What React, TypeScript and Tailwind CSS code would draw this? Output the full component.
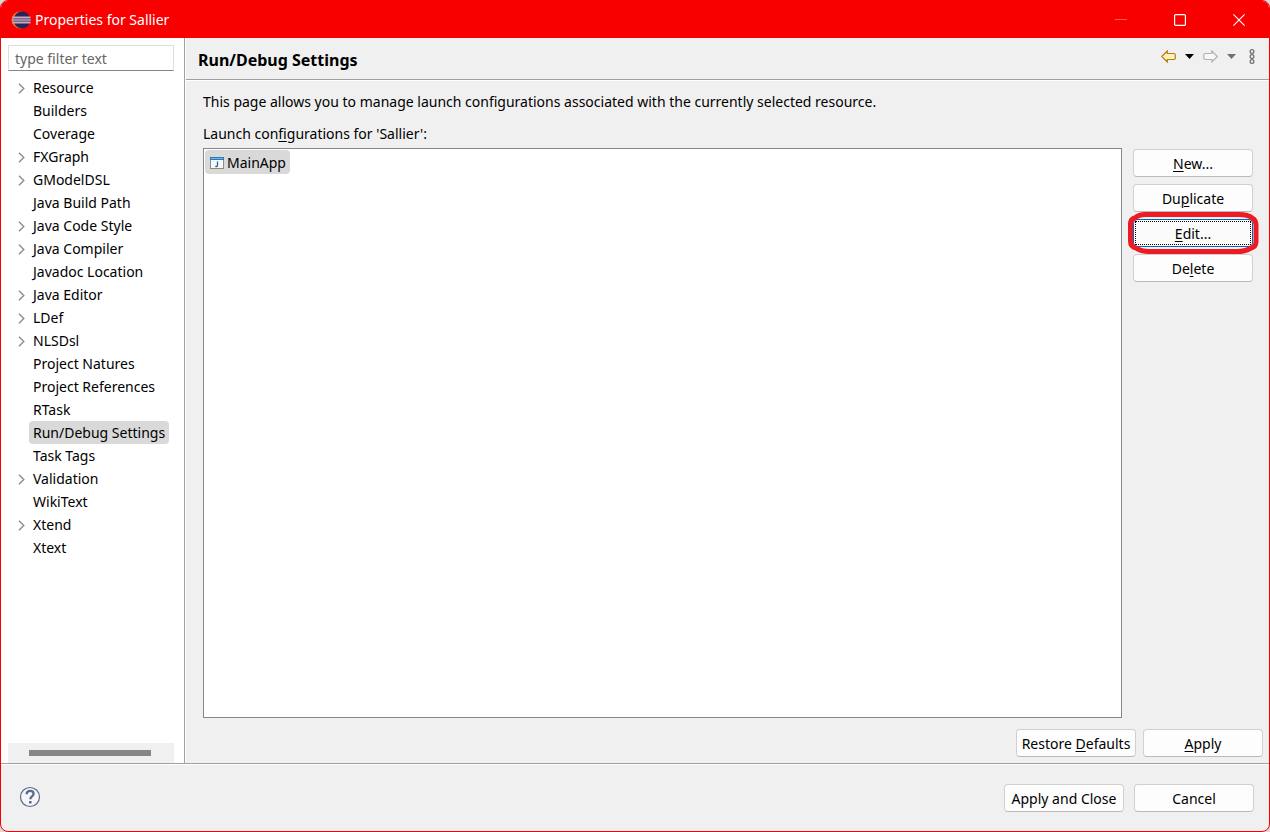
import type { ReactNode } from "react";

type TreeItem = { name: string; expandable?: boolean; selected?: boolean };

const treeItems: TreeItem[] = [
  { name: "Resource", expandable: true },
  { name: "Builders" },
  { name: "Coverage" },
  { name: "FXGraph", expandable: true },
  { name: "GModelDSL", expandable: true },
  { name: "Java Build Path" },
  { name: "Java Code Style", expandable: true },
  { name: "Java Compiler", expandable: true },
  { name: "Javadoc Location" },
  { name: "Java Editor", expandable: true },
  { name: "LDef", expandable: true },
  { name: "NLSDsl", expandable: true },
  { name: "Project Natures" },
  { name: "Project References" },
  { name: "RTask" },
  { name: "Run/Debug Settings", selected: true },
  { name: "Task Tags" },
  { name: "Validation", expandable: true },
  { name: "WikiText" },
  { name: "Xtend", expandable: true },
  { name: "Xtext" },
];

function Mnemonic({ children }: { children: ReactNode }) {
  return <span className="underline decoration-1 underline-offset-2">{children}</span>;
}

function DialogButton({ children, focused = false }: { children: ReactNode; focused?: boolean }) {
  return (
    <button
      type="button"
      className={
        focused
          ? "h-7 w-[120px] rounded border border-[#0067c0] bg-[#fbfbfb] p-px text-sm whitespace-nowrap"
          : "h-7 w-[120px] rounded border border-[#d0d0d0] border-b-[#bababa] bg-[#fdfdfd] pt-0.5 text-sm whitespace-nowrap"
      }
    >
      {focused ? (
        <span className="flex h-full items-center justify-center border border-dotted border-black pt-0.5">{children}</span>
      ) : (
        children
      )}
    </button>
  );
}

function EclipseLogo() {
  return (
    <svg width="20" height="18" viewBox="0 0 20 18" aria-hidden="true">
      <circle cx="9" cy="9" r="8.500" fill="#e8742c" />
      <circle cx="11" cy="9" r="8.500" fill="#2c2255" />
      <path d="M1.500 6.200h18M1.200 9h18.600M1.500 11.800h18" stroke="#c9a9bd" strokeWidth="1.500" />
      <path d="M2 7.600h17.400M2 10.400h17.400" stroke="#8a6f9c" strokeWidth="1" />
    </svg>
  );
}

function JavaAppIcon() {
  return (
    <svg width="14" height="13" viewBox="0 0 14 13" aria-hidden="true">
      <rect x="0.5" y="0.5" width="13" height="11" fill="#f2fafd" stroke="#9a8b5c" />
      <path d="M.5 3v6M13.500 3v6" stroke="#7c93a0" />
      <rect width="14" height="3" fill="#2f78b7" />
      <path d="M1 1.500h12" stroke="#79b5e4" />
      <path d="M7.500 4.500v3.700c0 1.100-.8 1.500-2.200 1.200" fill="none" stroke="#2b628f" strokeWidth="1.300" />
    </svg>
  );
}

function Arrow({ forward = false }: { forward?: boolean }) {
  return (
    <svg width="15" height="13" viewBox="0 0 15 13" aria-hidden="true">
      {forward ? (
        <path d="M14.300 6.500 8.800 1v2.500H2.200Q.8 3.500.8 4.900V8.100Q.8 9.500 2.200 9.500h6.600V12z" fill="#f7f7f7" stroke="#b3b3b3" strokeWidth="1.200" />
      ) : (
        <path d="M.8 6.500 6.300 1v2.500h6.600q1.400 0 1.400 1.400v3.200q0 1.400-1.400 1.400H6.300V12z" fill="#fff3b8" stroke="#bc7b16" strokeWidth="1.200" />
      )}
    </svg>
  );
}

function MenuTriangle({ enabled = false }: { enabled?: boolean }) {
  return (
    <svg width="9" height="5" viewBox="0 0 9 5" aria-hidden="true">
      <path d="M0 0h9L4.500 5z" fill={enabled ? "#000" : "#707070"} />
    </svg>
  );
}

export default function App() {
  return (
    <div className="bg-[#d9d9d9] font-['Noto_Sans','Open_Sans',sans-serif] text-sm text-black">
      <div className="flex min-h-screen flex-col overflow-hidden rounded-lg border border-[#f80000] bg-[#f0f0f0]">
        <header className="flex h-[37px] shrink-0 items-center bg-[#f80000] pr-px pl-[10px] text-white">
          <EclipseLogo />
          <h1 className="ml-1 flex-1 text-sm">Properties for Sallier</h1>
          <button type="button" aria-label="Minimize" disabled className="flex h-full w-[59px] items-center justify-center">
            <svg width="12" height="12" viewBox="0 0 12 12">
              <path d="M0 5.500h12" stroke="#fb5c5c" />
            </svg>
          </button>
          <button type="button" aria-label="Maximize" className="flex h-full w-[59px] items-center justify-center">
            <svg width="12" height="12" viewBox="0 0 12 12">
              <rect x="0.6" y="0.6" width="10.800" height="10.800" rx="1" fill="none" stroke="#fff" strokeWidth="1.200" />
            </svg>
          </button>
          <button type="button" aria-label="Close" className="flex h-full w-[59px] items-center justify-center">
            <svg width="12" height="12" viewBox="0 0 12 12">
              <path d="m.4.4 11.200 11.200M11.600.4.4 11.600" stroke="#fff" strokeWidth="1.100" />
            </svg>
          </button>
        </header>

        <div className="flex flex-1">
          <aside className="flex w-[184px] shrink-0 flex-col border-r border-[#a0a0a0] bg-white pt-[7px] pr-[10px] pl-[7px]">
            <input
              type="text"
              aria-label="Filter"
              placeholder="type filter text"
              className="h-[26px] w-full border border-[#dedede] border-b-[#868686] bg-white px-1.5 text-sm outline-none placeholder:text-[#666]"
            />
            <ul role="tree" aria-label="Property pages" className="mt-[5px] flex-1">
              {treeItems.map((item) => (
                <li key={item.name} role="treeitem" aria-selected={!!item.selected} className="flex h-[23px] items-center">
                  <span className="flex w-[21px] justify-center pt-px pl-1.5">
                    {item.expandable && (
                      <svg width="7" height="11" viewBox="0 0 7 11" aria-hidden="true">
                        <path d="m1 .8 4.800 4.700L1 10.200" fill="none" stroke="#8c8c8c" strokeWidth="1.400" />
                      </svg>
                    )}
                  </span>
                  <span
                    className={
                      item.selected
                        ? "flex h-full items-center rounded-sm bg-[#d9d9d9] px-1 whitespace-nowrap"
                        : "px-1 whitespace-nowrap"
                    }
                  >
                    {item.name}
                  </span>
                </li>
              ))}
            </ul>
            <div className="h-5 bg-[#f0f0f0] pt-[7px] pr-[23px] pl-[21px]">
              <div className="h-1.5 bg-[#868686]" />
            </div>
          </aside>

          <main className="flex min-w-0 flex-1 flex-col border-l border-white">
            <div className="flex h-[42px] items-center justify-between border-b border-[#a0a0a0] pr-[14px] pl-3">
              <h2 className="pt-0.5 text-base font-bold">Run/Debug Settings</h2>
              <div className="flex items-center pb-1">
                <button type="button" aria-label="Back">
                  <Arrow />
                </button>
                <button type="button" aria-label="Back history" className="ml-[9px]">
                  <MenuTriangle enabled />
                </button>
                <button type="button" aria-label="Forward" className="ml-[9px]">
                  <Arrow forward />
                </button>
                <button type="button" aria-label="Forward history" className="ml-[9px]">
                  <MenuTriangle />
                </button>
                <button type="button" aria-label="View menu" className="ml-[13px]">
                  <svg width="6" height="15" viewBox="0 0 6 15">
                    <g fill="none" stroke="#6f6f6f" strokeWidth="1.200">
                      <circle cx="3" cy="2.500" r="1.900" />
                      <circle cx="3" cy="7.500" r="1.900" />
                      <circle cx="3" cy="12.500" r="1.900" />
                    </g>
                  </svg>
                </button>
              </div>
            </div>

            <div className="flex flex-1 flex-col border-t border-white pt-[11px] pb-1.5 pl-[17px]">
              <p>This page allows you to manage launch configurations associated with the currently selected resource.</p>
              <p id="launch-label" className="mt-3">
                Launch con<Mnemonic>f</Mnemonic>igurations for 'Sallier':
              </p>
              <div className="mt-1 flex flex-1 gap-[11px] pr-4">
                <ul role="listbox" aria-labelledby="launch-label" className="flex-1 border border-[#828790] bg-white p-px">
                  <li role="option" aria-selected="true" className="flex h-6 w-fit items-center gap-[3px] rounded-sm bg-[#d9d9d9] pt-0.5 pr-1 pl-[5px]">
                    <JavaAppIcon />
                    MainApp
                  </li>
                </ul>
                <div className="flex flex-col gap-[7px] pt-px">
                  <DialogButton>
                    <Mnemonic>N</Mnemonic>ew...
                  </DialogButton>
                  <DialogButton>
                    Du<Mnemonic>p</Mnemonic>licate
                  </DialogButton>
                  <div className="relative flex">
                    <DialogButton focused>
                      <span>
                        <Mnemonic>E</Mnemonic>dit...
                      </span>
                    </DialogButton>
                    <svg className="pointer-events-none absolute -top-2 -left-1.5" width="133" height="44" viewBox="0 0 133 44" aria-hidden="true">
                      <path
                        d="M18 3.500H112Q121 3.500 125 7Q129 9 129 14V31Q129 36 123 37.500Q118 40.500 110 40.500H22Q14 40.500 9 37Q3.500 36 3.500 30V13Q3.500 8 8 7Q12 3.500 18 3.500Z"
                        fill="none"
                        stroke="#ed1c24"
                        strokeWidth="5"
                      />
                    </svg>
                  </div>
                  <DialogButton>
                    De<Mnemonic>l</Mnemonic>ete
                  </DialogButton>
                </div>
              </div>
              <div className="mt-[11px] flex justify-end gap-[7px] pr-1.5">
                <DialogButton>
                  Restore <Mnemonic>D</Mnemonic>efaults
                </DialogButton>
                <DialogButton>
                  <Mnemonic>A</Mnemonic>pply
                </DialogButton>
              </div>
            </div>
          </main>
        </div>

        <div className="border-t border-[#a0a0a0]">
          <footer className="flex h-[67px] items-center border-t border-white pr-[15px] pl-[18px]">
            <button type="button" aria-label="Help" className="mr-auto pb-0.5">
              <svg width="22" height="22" viewBox="0 0 22 22">
                <circle cx="11" cy="11" r="9.500" fill="#f6f6f6" stroke="#586b90" strokeWidth="1.200" />
                <path d="M7.600 8.300C7.700 5.900 9.100 4.900 11.100 4.900c2.100 0 3.500 1.100 3.500 2.900 0 2.500-3.300 2.600-3.300 5.500" fill="none" stroke="#586b90" strokeWidth="2.300" />
                <rect x="10" y="15" width="2.600" height="2.400" rx="0.600" fill="#586b90" />
              </svg>
            </button>
            <div className="flex gap-[10px]">
              <DialogButton>Apply and Close</DialogButton>
              <DialogButton>Cancel</DialogButton>
            </div>
          </footer>
        </div>
      </div>
    </div>
  );
}
